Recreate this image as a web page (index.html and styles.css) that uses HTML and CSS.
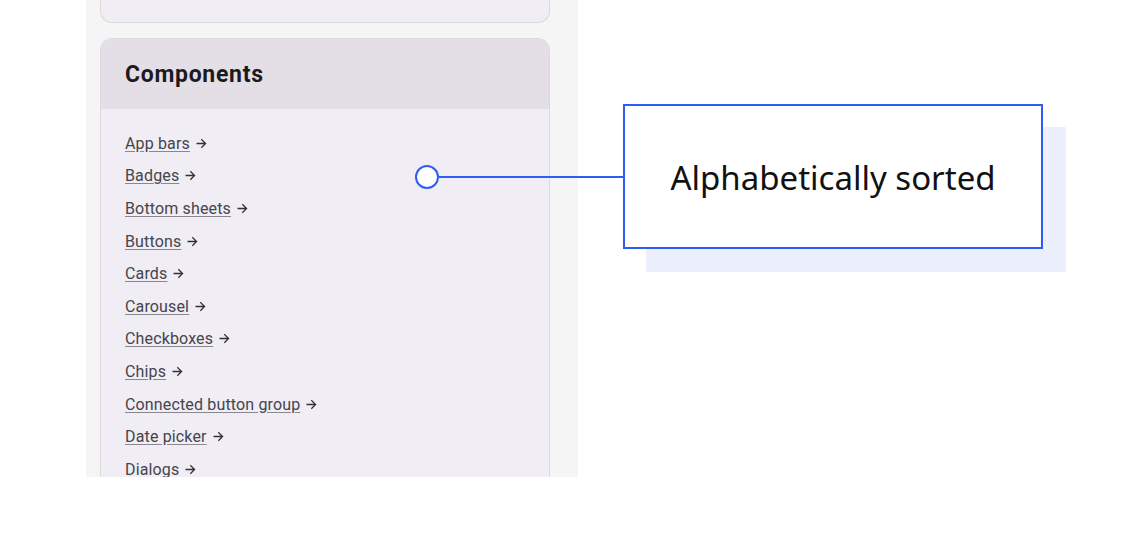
FILE: index.html
```html
<!DOCTYPE html>
<html>
<head>
<meta charset="utf-8">
<link rel="stylesheet" href="styles.css">
</head>
<body>
<div class="stage">
  <div class="panel">
    <div class="card card-top"></div>
    <div class="card">
      <div class="card-head"><h2>Components</h2></div>
      <ul class="links">
        <li><a>App bars</a><svg class="arr" viewBox="0 0 24 24"><path d="M4 12h15M12.5 5l7 7-7 7"/></svg></li>
        <li><a>Badges</a><svg class="arr" viewBox="0 0 24 24"><path d="M4 12h15M12.5 5l7 7-7 7"/></svg></li>
        <li><a>Bottom sheets</a><svg class="arr" viewBox="0 0 24 24"><path d="M4 12h15M12.5 5l7 7-7 7"/></svg></li>
        <li><a>Buttons</a><svg class="arr" viewBox="0 0 24 24"><path d="M4 12h15M12.5 5l7 7-7 7"/></svg></li>
        <li><a>Cards</a><svg class="arr" viewBox="0 0 24 24"><path d="M4 12h15M12.5 5l7 7-7 7"/></svg></li>
        <li><a>Carousel</a><svg class="arr" viewBox="0 0 24 24"><path d="M4 12h15M12.5 5l7 7-7 7"/></svg></li>
        <li><a>Checkboxes</a><svg class="arr" viewBox="0 0 24 24"><path d="M4 12h15M12.5 5l7 7-7 7"/></svg></li>
        <li><a>Chips</a><svg class="arr" viewBox="0 0 24 24"><path d="M4 12h15M12.5 5l7 7-7 7"/></svg></li>
        <li><a>Connected button group</a><svg class="arr" viewBox="0 0 24 24"><path d="M4 12h15M12.5 5l7 7-7 7"/></svg></li>
        <li><a>Date picker</a><svg class="arr" viewBox="0 0 24 24"><path d="M4 12h15M12.5 5l7 7-7 7"/></svg></li>
        <li><a>Dialogs</a><svg class="arr" viewBox="0 0 24 24"><path d="M4 12h15M12.5 5l7 7-7 7"/></svg></li>
      </ul>
    </div>
  </div>
  <div class="pin"></div>
  <div class="leader"></div>
  <div class="callout">Alphabetically sorted</div>
</div>
</body>
</html>
```
FILE: styles.css
```css
html, body {
  margin: 0;
  padding: 0;
  background: #ffffff;
}
.stage {
  position: relative;
  width: 1146px;
  height: 544px;
}
.panel {
  margin-left: 86px;
  width: 492px;
  height: 477px;
  background: #f4f5f4;
  overflow: hidden;
  display: flex;
  flex-direction: column;
  gap: 15px;
  padding: 0 28px 0 14px;
  box-sizing: border-box;
  font-family: Roboto, "Liberation Sans", sans-serif;
}
.card {
  flex: none;
  background: #f0edf4;
  border: 1px solid #dcd8e0;
  border-radius: 12px;
  overflow: hidden;
}
.card-top {
  height: 23px;
  box-sizing: border-box;
  border-top: none;
  border-radius: 0 0 12px 12px;
}
.card-head {
  height: 70px;
  background: #e4dfe6;
  display: flex;
  align-items: center;
  padding-left: 24px;
}
.card-head h2 {
  margin: 0;
  font-size: 23px;
  font-weight: 700;
  color: #1b1b1f;
  letter-spacing: 0.7px;
}
.links {
  list-style: none;
  margin: 0;
  padding: 18px 24px 0 24px;
}
.links li {
  display: flex;
  align-items: center;
  height: 32.6px;
  font-size: 16px;
  letter-spacing: 0.15px;
  color: #46444c;
  white-space: nowrap;
}
.links a {
  text-decoration: underline;
  text-decoration-color: #8a8790;
  text-underline-offset: 2px;
  color: #46444c;
}
.arr {
  width: 13px;
  height: 13px;
  margin-left: 5px;
  fill: none;
  stroke: #333137;
  stroke-width: 2.4;
  stroke-linecap: square;
}
.pin {
  position: absolute;
  left: 415px;
  top: 165px;
  width: 20px;
  height: 20px;
  border: 2px solid #2f5cf2;
  border-radius: 50%;
  background: #ffffff;
}
.leader {
  position: absolute;
  left: 439px;
  top: 176px;
  width: 186px;
  height: 2px;
  background: #2f5cf2;
}
.callout {
  position: absolute;
  left: 623px;
  top: 104px;
  width: 420px;
  height: 145px;
  box-sizing: border-box;
  border: 2px solid #2f5cf2;
  background: #ffffff;
  box-shadow: 23px 23px 0 #ecf0fd;
  display: flex;
  align-items: center;
  justify-content: center;
  padding-top: 2px;
  font-family: "Noto Sans", sans-serif;
  font-size: 33px;
  color: #111111;
}
```
